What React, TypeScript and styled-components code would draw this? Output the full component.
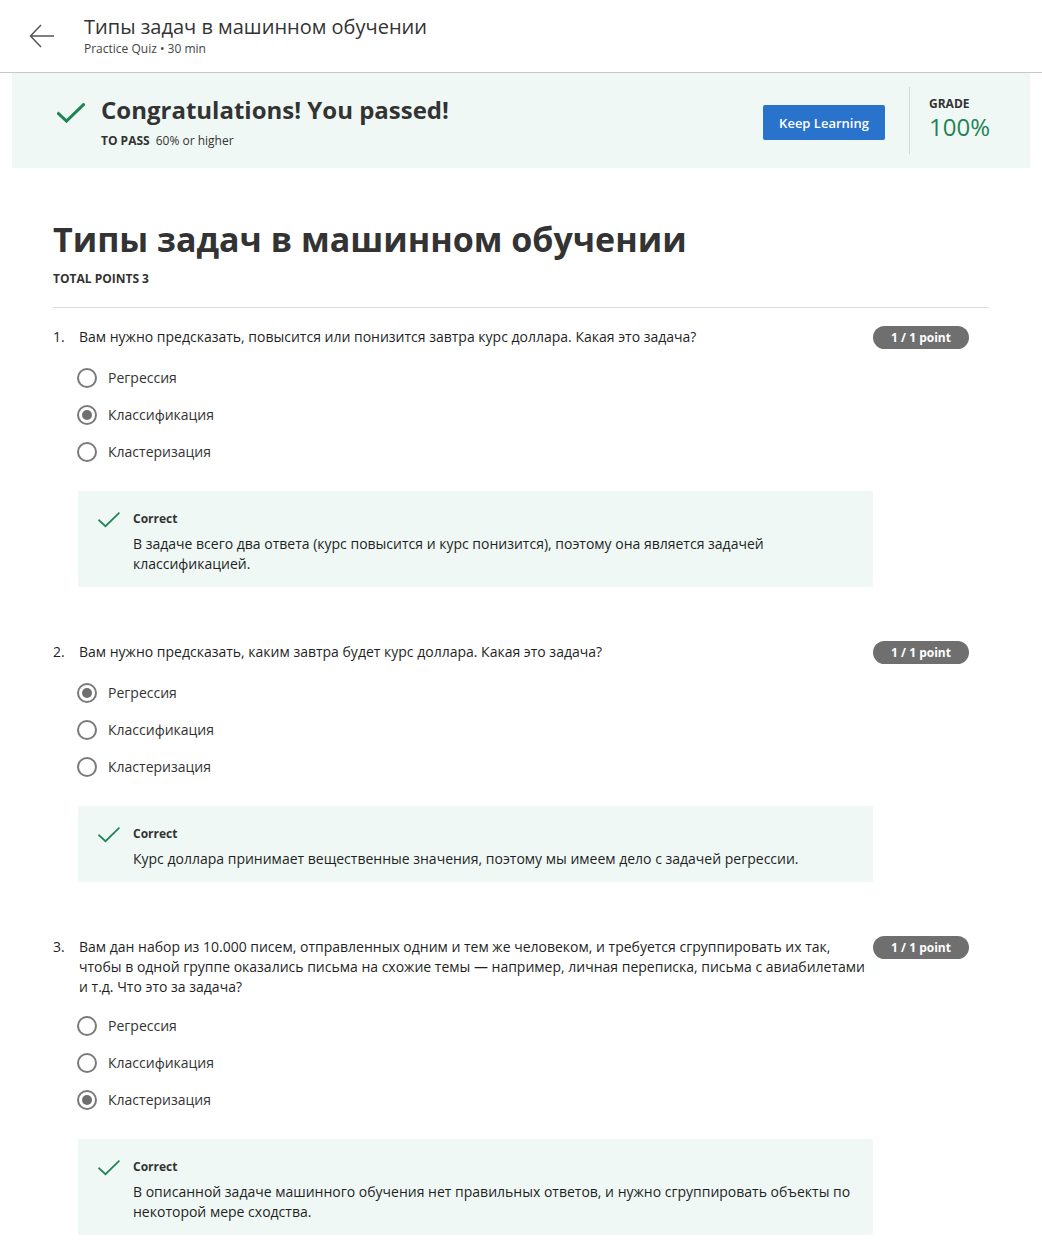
import React from "react";
import styled, { createGlobalStyle } from "styled-components";

const GlobalStyle = createGlobalStyle`
  html, body { margin: 0; padding: 0; background: #ffffff; }
  body { font-family: "Open Sans", "Noto Sans", sans-serif; color: #1f1f1f; }
  * { box-sizing: border-box; }
`;

const Page = styled.div`
  width: 1042px;
`;

const Header = styled.header`
  height: 73px;
  border-bottom: 1px solid #c8c8c8;
  display: flex;
  align-items: flex-start;
  padding: 13px 0 0 28px;
`;

const BackButton = styled.div`
  width: 28px;
  height: 28px;
  margin-top: 9px;
  margin-right: 28px;
  display: flex;
  align-items: center;
  justify-content: center;
`;

const HeaderText = styled.div`
  display: flex;
  flex-direction: column;
`;

const HeaderTitle = styled.div`
  font-size: 20px;
  line-height: 28px;
  color: #333;
`;

const HeaderSub = styled.div`
  font-size: 12px;
  line-height: 16px;
  color: #444;
`;

const Banner = styled.section`
  margin: 0 12px;
  height: 95px;
  background: #eff8f5;
  display: flex;
  align-items: flex-start;
  padding: 0 41px 0 44px;
`;

const BannerMain = styled.div`
  flex: 1;
  display: flex;
  align-items: flex-start;
  gap: 16px;
  padding-top: 21px;
`;

const BannerCheck = styled.div`
  padding-top: 9px;
  padding-left: 1px;
`;

const BannerText = styled.div`
  display: flex;
  flex-direction: column;
`;

const BannerHeading = styled.h2`
  margin: 0;
  font-size: 24px;
  line-height: 32px;
  font-weight: 700;
  color: #333;
`;

const PassLine = styled.div`
  margin-top: 6px;
  font-size: 12px;
  line-height: 18px;
  color: #333;
  display: flex;
  gap: 6px;
`;

const Strong = styled.span`
  font-weight: 700;
`;

const KeepButton = styled.button`
  margin-top: 32px;
  width: 122px;
  height: 35px;
  border: none;
  border-radius: 2px;
  background: #2a73cc;
  color: #fff;
  font-family: "Open Sans", sans-serif;
  font-size: 13px;
  font-weight: 600;
  margin-right: 24px;
`;

const Divider = styled.div`
  margin-top: 14px;
  width: 1px;
  height: 67px;
  background: #d9d9d9;
  margin-right: 19px;
`;

const Grade = styled.div`
  margin-top: 23px;
  display: flex;
  flex-direction: column;
  width: 60px;
`;

const GradeLabel = styled.div`
  font-size: 12px;
  font-weight: 700;
  line-height: 16px;
  color: #333;
`;

const GradeValue = styled.div`
  font-size: 24px;
  line-height: 30px;
  color: #1f8354;
`;

const Content = styled.main`
  padding: 0 53px;
`;

const Title = styled.h1`
  margin: 48px 0 0;
  font-size: 34px;
  line-height: 46px;
  font-weight: 700;
  color: #333;
`;

const TotalPoints = styled.div`
  margin-top: 9px;
  font-size: 12px;
  font-weight: 700;
  line-height: 16px;
  color: #333;
`;

const Rule = styled.hr`
  margin: 20px 0 0;
  border: none;
  border-top: 1px solid #dcdcdc;
`;

const QuestionList = styled.div`
  display: flex;
  flex-direction: column;
  gap: 54px;
  padding-top: 18px;
`;

const Question = styled.div`
  display: flex;
  flex-direction: column;
`;

const QuestionRow = styled.div`
  display: flex;
  align-items: flex-start;
`;

const QNum = styled.div`
  width: 26px;
  font-size: 14px;
  line-height: 20px;
  padding-top: 1px;
`;

const QText = styled.div`
  width: 790px;
  font-size: 14px;
  line-height: 20px;
  padding-top: 1px;
`;

const Badge = styled.div`
  margin-left: auto;
  margin-right: 20px;
  width: 96px;
  height: 23px;
  border-radius: 12px;
  background: #6f6f6f;
  color: #fff;
  font-size: 12px;
  font-weight: 700;
  display: flex;
  align-items: center;
  justify-content: center;
`;

const Options = styled.div`
  margin-top: 10px;
  padding-left: 24px;
  display: flex;
  flex-direction: column;
`;

const Option = styled.label`
  height: 37px;
  display: flex;
  align-items: center;
  gap: 11px;
  font-size: 14px;
  color: #333;
`;

const Radio = styled.span<{ $checked?: boolean }>`
  width: 20px;
  height: 20px;
  border-radius: 50%;
  border: 2px solid #7a7a7a;
  display: flex;
  align-items: center;
  justify-content: center;
  &::after {
    content: "";
    width: 10px;
    height: 10px;
    border-radius: 50%;
    background: #6f6f6f;
    display: ${(p) => (p.$checked ? "block" : "none")};
  }
`;

const Feedback = styled.div`
  margin: 21px 0 0 25px;
  width: 795px;
  background: #eff8f5;
  display: flex;
  padding: 19px 20px 13px 20px;
`;

const FeedbackIcon = styled.div`
  width: 35px;
  flex-shrink: 0;
  padding-top: 1px;
`;

const FeedbackBody = styled.div`
  display: flex;
  flex-direction: column;
  gap: 6px;
`;

const FeedbackLabel = styled.div`
  font-size: 12px;
  font-weight: 700;
  line-height: 18px;
  color: #333;
`;

const FeedbackText = styled.div`
  font-size: 14px;
  line-height: 20px;
  color: #1f1f1f;
`;

const Check = ({ size, stroke }: { size: number; stroke: number }) => (
  <svg width={size} height={size * 0.72} viewBox="0 0 28 20" fill="none">
    <path d="M1.5 10.5 L9.5 18 L26.5 1.5" stroke="#1f8354" strokeWidth={stroke} strokeLinecap="square" />
  </svg>
);

const Arrow = () => (
  <svg width="26" height="24" viewBox="0 0 26 24" fill="none">
    <path d="M25 12 H2 M12 1 L1.5 12 L12 23" stroke="#555" strokeWidth="1.5" />
  </svg>
);

type Q = {
  text: string;
  selected: number;
  feedback: string;
};

const OPTIONS = ["Регрессия", "Классификация", "Кластеризация"];

const QUESTIONS: Q[] = [
  {
    text: "Вам нужно предсказать, повысится или понизится завтра курс доллара. Какая это задача?",
    selected: 1,
    feedback:
      "В задаче всего два ответа (курс повысится и курс понизится), поэтому она является задачей классификацией.",
  },
  {
    text: "Вам нужно предсказать, каким завтра будет курс доллара. Какая это задача?",
    selected: 0,
    feedback: "Курс доллара принимает вещественные значения, поэтому мы имеем дело с задачей регрессии.",
  },
  {
    text: "Вам дан набор из 10.000 писем, отправленных одним и тем же человеком, и требуется сгруппировать их так, чтобы в одной группе оказались письма на схожие темы — например, личная переписка, письма с авиабилетами и т.д. Что это за задача?",
    selected: 2,
    feedback:
      "В описанной задаче машинного обучения нет правильных ответов, и нужно сгруппировать объекты по некоторой мере сходства.",
  },
];

export default function App() {
  return (
    <Page>
      <GlobalStyle />
      <Header>
        <BackButton>
          <Arrow />
        </BackButton>
        <HeaderText>
          <HeaderTitle>Типы задач в машинном обучении</HeaderTitle>
          <HeaderSub>Practice Quiz • 30 min</HeaderSub>
        </HeaderText>
      </Header>
      <Banner>
        <BannerMain>
          <BannerCheck>
            <Check size={28} stroke={3} />
          </BannerCheck>
          <BannerText>
            <BannerHeading>Congratulations! You passed!</BannerHeading>
            <PassLine>
              <Strong>TO PASS</Strong>
              <span>60% or higher</span>
            </PassLine>
          </BannerText>
        </BannerMain>
        <KeepButton>Keep Learning</KeepButton>
        <Divider />
        <Grade>
          <GradeLabel>GRADE</GradeLabel>
          <GradeValue>100%</GradeValue>
        </Grade>
      </Banner>
      <Content>
        <Title>Типы задач в машинном обучении</Title>
        <TotalPoints>TOTAL POINTS 3</TotalPoints>
        <Rule />
        <QuestionList>
          {QUESTIONS.map((q, i) => (
            <Question key={i}>
              <QuestionRow>
                <QNum>{i + 1}.</QNum>
                <QText>{q.text}</QText>
                <Badge>1 / 1 point</Badge>
              </QuestionRow>
              <Options>
                {OPTIONS.map((o, j) => (
                  <Option key={o}>
                    <Radio $checked={j === q.selected} />
                    {o}
                  </Option>
                ))}
              </Options>
              <Feedback>
                <FeedbackIcon>
                  <Check size={22} stroke={2.2} />
                </FeedbackIcon>
                <FeedbackBody>
                  <FeedbackLabel>Correct</FeedbackLabel>
                  <FeedbackText>{q.feedback}</FeedbackText>
                </FeedbackBody>
              </Feedback>
            </Question>
          ))}
        </QuestionList>
      </Content>
    </Page>
  );
}
